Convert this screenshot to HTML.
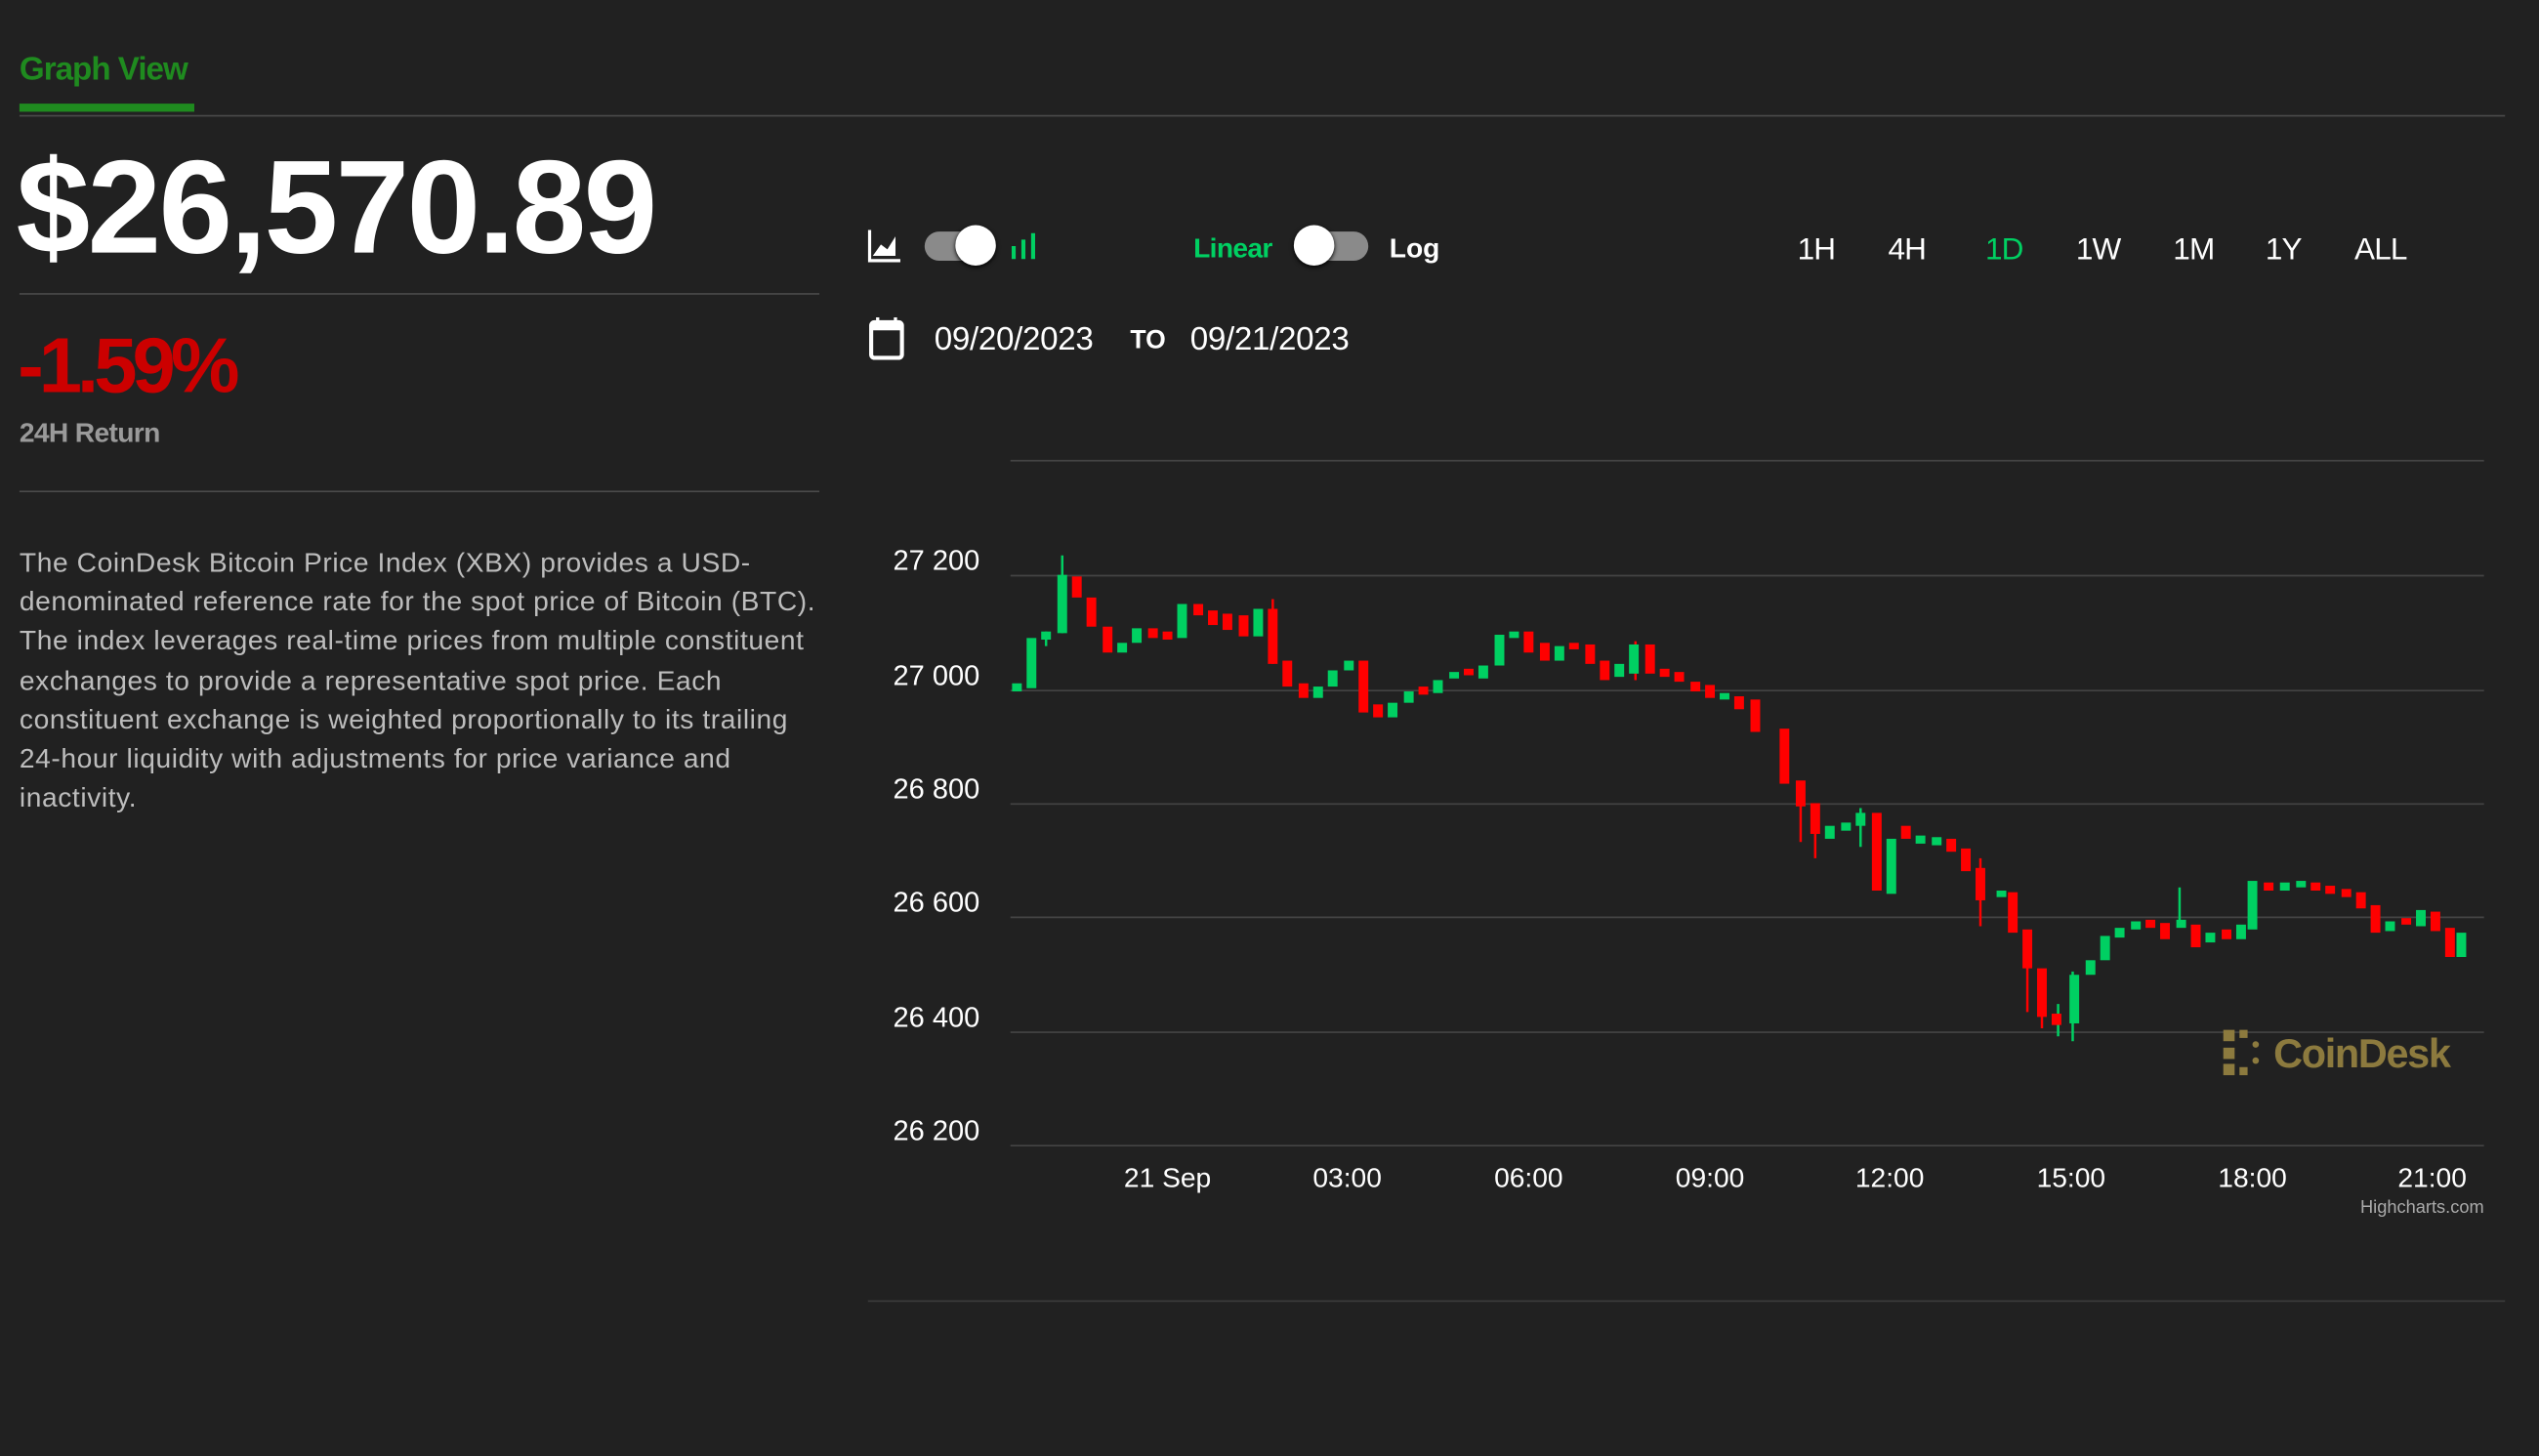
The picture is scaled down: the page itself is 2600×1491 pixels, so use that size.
<!DOCTYPE html>
<html><head><meta charset="utf-8"><style>
html,body{margin:0;padding:0;background:#212121;width:2600px;height:1490px;overflow:hidden}
#w{position:absolute;left:0;top:0;width:1568px;height:899px;transform:scale(1.6582);transform-origin:0 0;font-family:"Liberation Sans",Arial,sans-serif;color:#fff}
.a{position:absolute;white-space:nowrap}
.ln{position:absolute;height:1px;background:#4a4a4a}
.rb{position:absolute;top:144px;font-size:19px;letter-spacing:-0.5px}
</style></head><body><div id="w">
<div class="a" style="left:12px;top:32px;font-size:20px;font-weight:bold;color:#1f8b1f;letter-spacing:-0.6px">Graph View</div>
<div class="a" style="left:12px;top:64px;width:108px;height:5px;background:#1f8b1f"></div>
<div class="ln" style="left:12px;top:71px;width:1535px"></div>
<div class="a" style="left:10px;top:82px;font-size:82px;font-weight:bold;letter-spacing:-1.6px">$26,570.89</div>
<div class="ln" style="left:12px;top:181px;width:494px"></div>
<div class="a" style="left:11px;top:199px;font-size:48px;font-weight:bold;color:#c00;letter-spacing:-3px">-1.59%</div>
<div class="a" style="left:12px;top:258px;font-size:17px;font-weight:bold;color:#9a9a9a;letter-spacing:-0.4px">24H Return</div>
<div class="ln" style="left:12px;top:303px;width:494px"></div>
<div class="a" style="left:12px;top:336px;font-size:17px;line-height:24.2px;color:#bdbdbd;letter-spacing:0.35px">The CoinDesk Bitcoin Price Index (XBX) provides a USD-<br>denominated reference rate for the spot price of Bitcoin (BTC).<br>The index leverages real-time prices from multiple constituent<br>exchanges to provide a representative spot price. Each<br>constituent exchange is weighted proportionally to its trailing<br>24-hour liquidity with adjustments for price variance and<br>inactivity.</div>

<svg class="a" style="left:536px;top:142px" width="22" height="20" viewBox="0 0 22 20"><path d="M1 0V19H20" stroke="#fff" stroke-width="2" fill="none"/><path d="M3 16L8 9L12 12L17 4V16Z" fill="#fff"/></svg>
<div class="a" style="left:571px;top:143px;width:44px;height:18px;border-radius:9px;background:#8a8a8a"></div>
<div class="a" style="left:590px;top:139px;width:25px;height:25px;border-radius:50%;background:#fff;box-shadow:0 1px 3px #000"></div>
<svg class="a" style="left:624px;top:142px" width="18" height="20" viewBox="0 0 18 20"><path d="M2 10V18M8 6V18M14 2V18" stroke="#00d062" stroke-width="2.5"/></svg>
<div class="a" style="left:737px;top:144px;font-size:17px;font-weight:bold;color:#00d062;letter-spacing:-0.4px">Linear</div>
<div class="a" style="left:801px;top:143px;width:44px;height:18px;border-radius:9px;background:#8a8a8a"></div>
<div class="a" style="left:799px;top:139px;width:25px;height:25px;border-radius:50%;background:#fff;box-shadow:0 1px 3px #000"></div>
<div class="a" style="left:858px;top:144px;font-size:17px;font-weight:bold">Log</div>
<div class="rb" style="left:1110px">1H</div>
<div class="rb" style="left:1166px">4H</div>
<div class="rb" style="left:1226px;color:#00d062">1D</div>
<div class="rb" style="left:1282px">1W</div>
<div class="rb" style="left:1342px">1M</div>
<div class="rb" style="left:1399px">1Y</div>
<div class="rb" style="left:1454px">ALL</div>

<svg class="a" style="left:536px;top:194px" width="24" height="30" viewBox="0 0 24 30"><rect x="2" y="5" width="19" height="22" rx="2" fill="none" stroke="#fff" stroke-width="2.5"/><rect x="2" y="5" width="19" height="5" fill="#fff"/><path d="M6 2V6M17 2V6" stroke="#fff" stroke-width="2"/></svg>
<div class="a" style="left:577px;top:199px;font-size:20px;letter-spacing:-0.2px">09/20/2023</div>
<div class="a" style="left:698px;top:202px;font-size:16px;font-weight:bold">TO</div>
<div class="a" style="left:735px;top:199px;font-size:20px;letter-spacing:-0.2px">09/21/2023</div>

<svg class="a" style="left:0;top:0" width="1568" height="899" viewBox="0 0 1568 899">
<g stroke="#444" stroke-width="1">
<path d="M624 284.5H1534M624 355.5H1534M624 426.5H1534M624 496.5H1534M624 566.5H1534M624 637.5H1534M624 707.5H1534"/>
<path d="M536 803.5H1547" stroke="#3a3a3a"/>
</g>
<g fill="#fff" font-size="17.5" text-anchor="end" font-family="Liberation Sans,Arial,sans-serif">
<text x="605" y="352">27 200</text><text x="605" y="423">27 000</text><text x="605" y="493">26 800</text><text x="605" y="563">26 600</text><text x="605" y="634">26 400</text><text x="605" y="704">26 200</text>
</g>
<g fill="#fff" font-size="17" text-anchor="middle" font-family="Liberation Sans,Arial,sans-serif">
<text x="721" y="733">21 Sep</text><text x="832" y="733">03:00</text><text x="944" y="733">06:00</text><text x="1056" y="733">09:00</text><text x="1167" y="733">12:00</text><text x="1279" y="733">15:00</text><text x="1391" y="733">18:00</text><text x="1502" y="733">21:00</text>
</g>
<text x="1534" y="749" fill="#aaa" font-size="11" text-anchor="end" font-family="Liberation Sans,Arial,sans-serif">Highcharts.com</text>
<g fill="#8c7a3e"><rect x="1373" y="636" width="7" height="7"/><rect x="1373" y="647" width="7" height="7"/><rect x="1373" y="657" width="7" height="7"/><rect x="1383" y="636" width="5" height="5"/><rect x="1383" y="659" width="5" height="5"/><circle cx="1393" cy="645" r="2"/><circle cx="1393" cy="655" r="2"/></g>
<text x="1404" y="659" fill="#8c7a3e" font-size="25" font-weight="bold" letter-spacing="-0.8" font-family="Liberation Sans,Arial,sans-serif">CoinDesk</text>
<g stroke-width="1.5">
<path stroke="#00d062" d="M656 343V391M646 390V399M1149 499V523M1346 548V572M1280 600V643M1271 620V640"/>
<path stroke="#f00" d="M786 370V410M1112 484V520M1121 500V530M1261 600V635M1252 580V625M1223 530V572M1010 396V420"/>
</g>
<g fill="#00d062">
<rect x="625" y="422" width="6" height="5"/><rect x="634" y="394" width="6" height="31"/><rect x="643" y="390" width="6" height="5"/><rect x="653" y="355" width="6" height="36"/><rect x="690" y="397" width="6" height="6"/><rect x="699" y="388" width="6" height="9"/><rect x="727" y="373" width="6" height="21"/><rect x="774" y="376" width="6" height="17"/><rect x="811" y="424" width="6" height="7"/><rect x="820" y="414" width="6" height="10"/><rect x="830" y="408" width="6" height="6"/><rect x="857" y="434" width="6" height="9"/><rect x="867" y="427" width="6" height="7"/><rect x="885" y="420" width="6" height="8"/><rect x="895" y="415" width="6" height="4"/><rect x="913" y="411" width="6" height="8"/><rect x="923" y="392" width="6" height="19"/><rect x="932" y="390" width="6" height="4"/><rect x="960" y="399" width="6" height="9"/><rect x="997" y="410" width="6" height="8"/><rect x="1006" y="398" width="6" height="18"/><rect x="1062" y="428" width="6" height="4"/><rect x="1127" y="510" width="6" height="8"/><rect x="1137" y="508" width="6" height="5"/><rect x="1146" y="502" width="6" height="8"/><rect x="1165" y="518" width="6" height="34"/><rect x="1183" y="516" width="6" height="5"/><rect x="1193" y="517" width="6" height="5"/><rect x="1233" y="550" width="6" height="4"/><rect x="1278" y="602" width="6" height="30"/><rect x="1288" y="593" width="6" height="9"/><rect x="1297" y="578" width="6" height="15"/><rect x="1306" y="573" width="6" height="6"/><rect x="1316" y="569" width="6" height="5"/><rect x="1344" y="568" width="6" height="5"/><rect x="1362" y="576" width="6" height="6"/><rect x="1381" y="571" width="6" height="9"/><rect x="1388" y="544" width="6" height="30"/><rect x="1408" y="545" width="6" height="5"/><rect x="1418" y="544" width="6" height="4"/><rect x="1473" y="569" width="6" height="6"/><rect x="1492" y="562" width="6" height="10"/><rect x="1517" y="576" width="6" height="15"/>
</g>
<g fill="#f00">
<rect x="662" y="356" width="6" height="13"/><rect x="671" y="369" width="6" height="18"/><rect x="681" y="387" width="6" height="16"/><rect x="709" y="388" width="6" height="6"/><rect x="718" y="390" width="6" height="5"/><rect x="737" y="373" width="6" height="7"/><rect x="746" y="377" width="6" height="9"/><rect x="755" y="379" width="6" height="10"/><rect x="765" y="380" width="6" height="13"/><rect x="783" y="376" width="6" height="34"/><rect x="792" y="408" width="6" height="16"/><rect x="802" y="422" width="6" height="9"/><rect x="839" y="408" width="6" height="32"/><rect x="848" y="435" width="6" height="8"/><rect x="876" y="424" width="6" height="5"/><rect x="904" y="413" width="6" height="4"/><rect x="941" y="390" width="6" height="13"/><rect x="951" y="397" width="6" height="11"/><rect x="969" y="397" width="6" height="4"/><rect x="979" y="398" width="6" height="12"/><rect x="988" y="408" width="6" height="12"/><rect x="1016" y="398" width="6" height="18"/><rect x="1025" y="413" width="6" height="5"/><rect x="1034" y="415" width="6" height="6"/><rect x="1044" y="421" width="6" height="6"/><rect x="1053" y="423" width="6" height="8"/><rect x="1071" y="430" width="6" height="8"/><rect x="1081" y="432" width="6" height="20"/><rect x="1099" y="450" width="6" height="34"/><rect x="1109" y="482" width="6" height="16"/><rect x="1118" y="496" width="6" height="19"/><rect x="1156" y="502" width="6" height="48"/><rect x="1174" y="510" width="6" height="8"/><rect x="1202" y="518" width="6" height="8"/><rect x="1211" y="524" width="6" height="14"/><rect x="1220" y="536" width="6" height="20"/><rect x="1240" y="551" width="6" height="25"/><rect x="1249" y="574" width="6" height="24"/><rect x="1258" y="598" width="6" height="30"/><rect x="1267" y="626" width="6" height="7"/><rect x="1325" y="568" width="6" height="5"/><rect x="1334" y="570" width="6" height="10"/><rect x="1353" y="571" width="6" height="14"/><rect x="1372" y="574" width="6" height="6"/><rect x="1398" y="545" width="6" height="5"/><rect x="1427" y="545" width="6" height="5"/><rect x="1436" y="547" width="6" height="5"/><rect x="1446" y="549" width="6" height="5"/><rect x="1455" y="551" width="6" height="10"/><rect x="1464" y="559" width="6" height="17"/><rect x="1483" y="567" width="6" height="4"/><rect x="1501" y="563" width="6" height="12"/><rect x="1510" y="573" width="6" height="18"/>
</g>
</svg>
</div></body></html>
